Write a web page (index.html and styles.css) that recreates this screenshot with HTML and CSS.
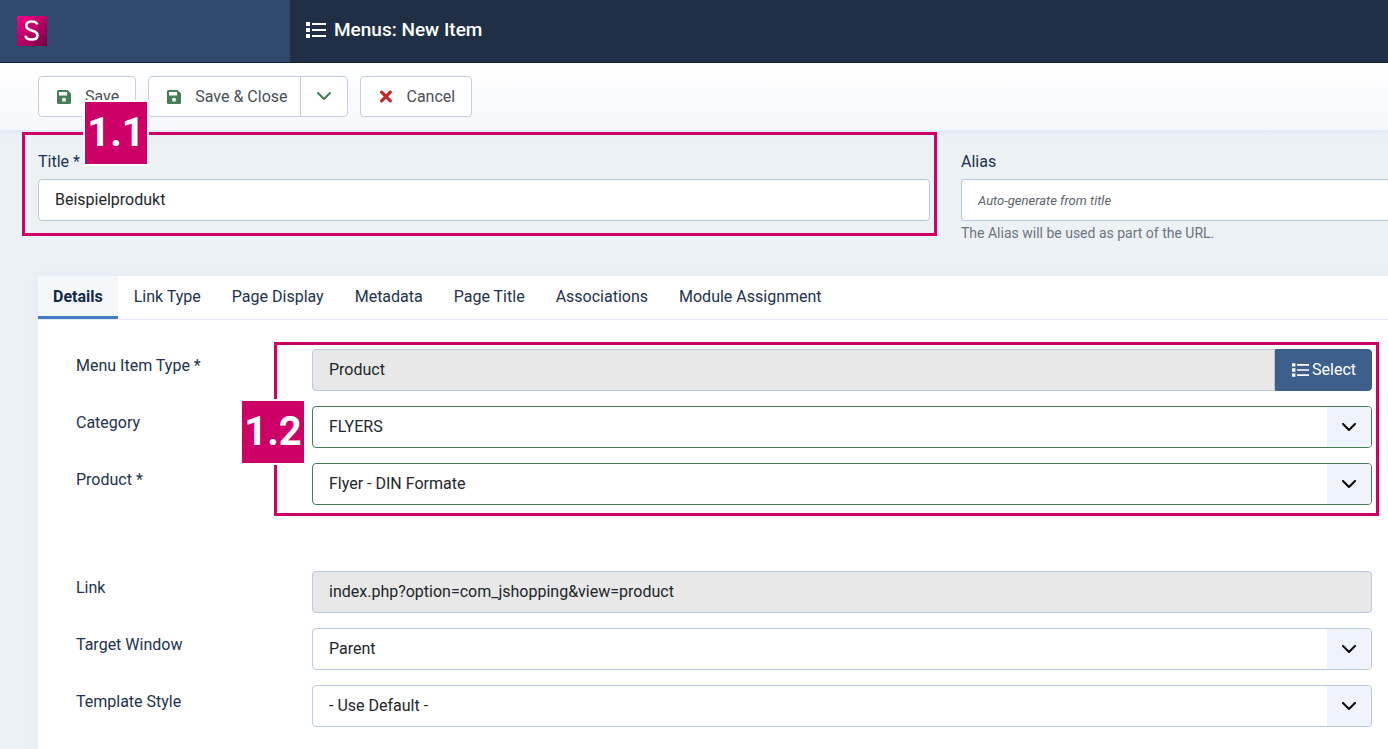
FILE: index.html
```
<!DOCTYPE html>
<html lang="en">
<head>
  <meta charset="UTF-8" />
  <meta name="viewport" content="width=device-width, initial-scale=1.0" />
  <title>Menus: New Item</title>
  <link rel="stylesheet" href="styles.css">
</head>
<body>
  <!-- Shared icons -->
  <svg class="icon-defs" aria-hidden="true">
    <symbol id="icon-list" viewBox="0 0 20 16">
      <path d="M0 0h4v4H0zM0 6h4v4H0zM0 12h4v4H0zM6 1h14v2H6zM6 7h14v2H6zM6 13h14v2H6z" />
    </symbol>
    <symbol id="icon-save" viewBox="0 0 14 14">
      <path fill-rule="evenodd" d="M1.500 0H10.500L14 3.500V12.500A1.500 1.500 0 0 1 12.500 14H1.500A1.500 1.500 0 0 1 0 12.500V1.500A1.500 1.500 0 0 1 1.500 0zM2 2V5.500H10V2zM7 7.700A2 2 0 1 0 7 11.700A2 2 0 1 0 7 7.700z" />
    </symbol>
    <symbol id="icon-chevron" viewBox="0 0 14 9">
      <path d="M1 1l6 6 6-6" fill="none" stroke="currentColor" stroke-width="2" stroke-linecap="round" stroke-linejoin="round" />
    </symbol>
    <symbol id="icon-cancel" viewBox="0 0 12 12">
      <path d="M2 2l8 8M10 2l-8 8" fill="none" stroke="currentColor" stroke-width="3" stroke-linecap="round" />
    </symbol>
  </svg>

  <header class="header">
    <div class="brand">
      <svg class="logo" viewBox="0 0 30 30" role="img" aria-label="Logo">
        <defs>
          <linearGradient id="logo-fill" x1="0" y1="0" x2="1" y2="1">
            <stop offset="0" stop-color="#f5008b" />
            <stop offset="0.500" stop-color="#b90067" />
            <stop offset="1" stop-color="#6d0040" />
          </linearGradient>
        </defs>
        <rect width="30" height="30" fill="url(#logo-fill)" />
        <path d="M20.300 8.500C19.800 6.500 17.500 5.500 14.700 5.500C11.300 5.500 9.300 7.200 9.300 9.700C9.300 12.500 11.500 13.500 14.700 14.500C18.300 15.500 20.500 16.500 20.500 19.200C20.500 22 18.200 23.500 14.700 23.500C11.300 23.500 8.800 22.200 8.500 19.700" fill="none" stroke="#fff" stroke-width="2.600" />
      </svg>
    </div>
    <h1 class="page-title">
      <svg class="icon icon-list"><use href="#icon-list" /></svg>
      Menus: New Item
    </h1>
  </header>

  <div class="toolbar">
    <button type="button" class="btn">
      <svg class="icon icon-save"><use href="#icon-save" /></svg>
      Save
    </button>
    <div class="btn-group">
      <button type="button" class="btn">
        <svg class="icon icon-save"><use href="#icon-save" /></svg>
        Save &amp; Close
      </button>
      <button type="button" class="btn btn-toggle" aria-label="More save options">
        <svg class="icon icon-chevron"><use href="#icon-chevron" /></svg>
      </button>
    </div>
    <button type="button" class="btn">
      <svg class="icon icon-cancel"><use href="#icon-cancel" /></svg>
      Cancel
    </button>
  </div>

  <main class="content">
    <div class="title-row">
      <div class="title-field">
        <label for="title">Title *</label>
        <input class="control" type="text" id="title" value="Beispielprodukt">
        <div class="callout callout-title"><span class="badge">1.1</span></div>
      </div>
      <div class="alias-field">
        <label for="alias">Alias</label>
        <input class="control" type="text" id="alias" placeholder="Auto-generate from title">
        <small class="help">The Alias will be used as part of the URL.</small>
      </div>
    </div>

    <section class="panel">
      <nav class="tabs">
        <button type="button" class="tab active">Details</button>
        <button type="button" class="tab">Link Type</button>
        <button type="button" class="tab">Page Display</button>
        <button type="button" class="tab">Metadata</button>
        <button type="button" class="tab">Page Title</button>
        <button type="button" class="tab">Associations</button>
        <button type="button" class="tab">Module Assignment</button>
      </nav>

      <div class="fields">
        <div class="field-group">
          <div class="field">
            <label for="type">Menu Item Type *</label>
            <div class="input-group">
              <input class="control" type="text" id="type" value="Product" readonly>
              <button type="button" class="btn-select">
                <svg class="icon icon-list-small"><use href="#icon-list" /></svg>
                Select
              </button>
            </div>
          </div>
          <div class="field">
            <label for="category">Category</label>
            <div class="select valid">
              <select class="control" id="category"><option>FLYERS</option></select>
              <span class="select-arrow"><svg class="icon icon-chevron"><use href="#icon-chevron" /></svg></span>
            </div>
          </div>
          <div class="field">
            <label for="product">Product *</label>
            <div class="select valid">
              <select class="control" id="product"><option>Flyer - DIN Formate</option></select>
              <span class="select-arrow"><svg class="icon icon-chevron"><use href="#icon-chevron" /></svg></span>
            </div>
          </div>
          <div class="callout callout-type"><span class="badge">1.2</span></div>
        </div>

        <div class="field-group">
          <div class="field">
            <label for="link">Link</label>
            <input class="control" type="text" id="link" value="index.php?option=com_jshopping&amp;view=product" readonly>
          </div>
          <div class="field">
            <label for="target">Target Window</label>
            <div class="select">
              <select class="control" id="target"><option>Parent</option></select>
              <span class="select-arrow"><svg class="icon icon-chevron"><use href="#icon-chevron" /></svg></span>
            </div>
          </div>
          <div class="field">
            <label for="template">Template Style</label>
            <div class="select">
              <select class="control" id="template"><option>- Use Default -</option></select>
              <span class="select-arrow"><svg class="icon icon-chevron"><use href="#icon-chevron" /></svg></span>
            </div>
          </div>
        </div>
      </div>
    </section>
  </main>
</body>
</html>
```

FILE: styles.css
```
* {
  box-sizing: border-box;
}

body {
  margin: 0;
  min-height: 100vh;
  display: flex;
  flex-direction: column;
  background: #ecf1f6;
  color: #22324d;
  font-family: Roboto, "Liberation Sans", sans-serif;
  font-size: 16px;
  line-height: 24px;
}

button,
input,
select {
  font: inherit;
}

.icon-defs {
  position: absolute;
  width: 0;
  height: 0;
}

.icon {
  flex: none;
  fill: currentColor;
}

/* Header */
.header {
  position: relative;
  z-index: 2;
  display: flex;
  height: 63px;
  background: #202f46;
  border-bottom: 1px solid #101d38;
}

.brand {
  display: flex;
  align-items: center;
  width: 290px;
  padding-left: 17px;
  background: #2f496d;
}

.logo {
  width: 30px;
  height: 30px;
}

.page-title {
  display: flex;
  align-items: center;
  gap: 8px;
  margin: 0;
  padding: 0 0 2px 16px;
  color: #fff;
  font-size: 19px;
  font-weight: 500;
}

.icon-list {
  width: 20px;
  height: 16px;
}

/* Toolbar */
.toolbar {
  position: relative;
  z-index: 1;
  display: flex;
  gap: 12px;
  padding: 13px 38px;
  background: linear-gradient(#fff, #f5f7fb);
  box-shadow: 0 1px 8px #dbe4f2;
}

.btn {
  display: flex;
  align-items: center;
  gap: 14px;
  height: 41px;
  padding: 0 16px 0 18px;
  border: 1px solid #c5cedd;
  border-radius: 4px;
  background: #fff;
  color: #495057;
  cursor: pointer;
}

.btn-group {
  display: flex;
}

.btn-group .btn:first-child {
  padding-right: 12px;
  border-radius: 4px 0 0 4px;
}

.btn-group .btn-toggle {
  padding: 0 16px;
  margin-left: -1px;
  border-radius: 0 4px 4px 0;
  color: #3f7d54;
}

.icon-save {
  width: 14px;
  height: 14px;
  color: #457d54;
}

.icon-chevron {
  width: 14px;
  height: 9px;
}

.icon-cancel {
  width: 14px;
  height: 13px;
  color: #c52827;
}

/* Form controls */
.control {
  display: block;
  width: 100%;
  height: 42px;
  padding: 0 16px;
  border: 1px solid #b8c9e0;
  border-radius: 4px;
  background: #fff;
  color: #22262a;
  appearance: none;
}

input.control {
  padding-bottom: 2px;
}

.control::placeholder {
  color: #5c636a;
  font-size: 13px;
  font-style: italic;
}

.control[readonly] {
  background: #e8e8e8;
}

.select {
  display: grid;
  grid-template-columns: minmax(0, 1fr) 45px;
}

.select .control {
  grid-area: 1 / 1 / 2 / 3;
}

.select-arrow {
  grid-area: 1 / 2;
  display: flex;
  align-items: center;
  justify-content: center;
  margin: 1px 1px 1px 0;
  border-radius: 0 3px 3px 0;
  background: #eff3fb;
  color: #000;
  pointer-events: none;
}

.select.valid .control {
  border-color: #457d54;
}

.input-group {
  display: flex;
}

.input-group .control {
  flex: 1;
  border-radius: 4px 0 0 4px;
}

.btn-select {
  display: flex;
  align-items: center;
  gap: 3px;
  padding: 0 15px 0 16px;
  border: 1px solid #395d8d;
  border-radius: 0 4px 4px 0;
  background: #3d5f8c;
  color: #fff;
  cursor: pointer;
}

.icon-list-small {
  width: 17px;
  height: 14px;
}

/* Title and alias */
.content {
  flex: 1;
  display: flex;
  flex-direction: column;
  padding-left: 38px;
}

.title-row {
  display: grid;
  grid-template-columns: minmax(0, 1fr) 427px;
  align-items: start;
  gap: 31px;
  padding-top: 20px;
}

.title-field {
  position: relative;
}

.title-row label {
  display: block;
  margin-bottom: 5px;
}

.alias-field .control {
  border-right: 0;
  border-radius: 4px 0 0 4px;
}

.help {
  display: block;
  margin-top: 2px;
  color: #6d757d;
  font-size: 14px;
  line-height: 20px;
}

/* Tabs */
.panel {
  flex: 1;
  margin-top: 33px;
  background: #fff;
  box-shadow: 0 2px 10px #dfe7f4;
}

.tabs {
  display: flex;
  gap: 1px;
  border-bottom: 1px solid #e3e9f4;
}

.tab {
  height: 43px;
  padding: 0 15px 2px;
  border: 0;
  background: none;
  color: #22324d;
  cursor: pointer;
}

.tab.active {
  background: #f5f8fa;
  box-shadow: inset 0 -3px #457bc2;
  color: #132847;
  font-weight: 700;
}

/* Field rows */
.fields {
  display: flex;
  flex-direction: column;
  gap: 66px;
  padding: 29px 16px 21px 38px;
}

.field-group {
  position: relative;
  display: flex;
  flex-direction: column;
  gap: 15px;
}

.field {
  display: grid;
  grid-template-columns: 220px minmax(0, 1fr);
  gap: 16px;
}

.field label {
  padding-top: 5px;
}

/* Numbered callouts */
.callout {
  position: absolute;
  z-index: 2;
  border: 3px solid #cc0066;
  pointer-events: none;
}

.callout-title {
  inset: -18px -7px -15px -16px;
}

.callout-type {
  inset: -7px -7px -11px 198px;
}

.badge {
  position: absolute;
  display: flex;
  align-items: center;
  justify-content: center;
  width: 66px;
  height: 66px;
  border: 2px solid #fff;
  background: #cc0066;
  color: #fff;
  font-size: 40px;
  font-weight: 700;
}

.callout-title .badge {
  top: -35px;
  left: 58px;
}

.callout-type .badge {
  top: 54px;
  left: -37px;
}
```
